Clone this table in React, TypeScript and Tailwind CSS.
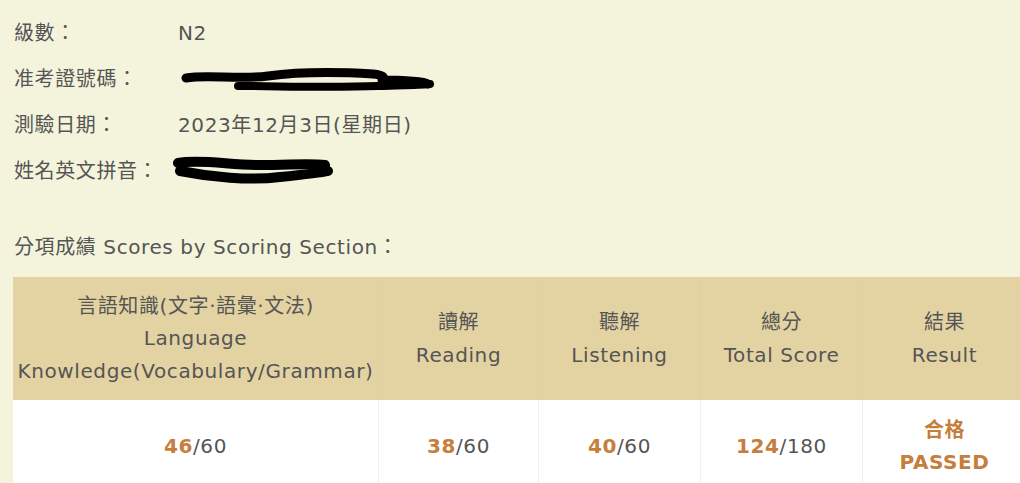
import React from "react";

const font = {
  fontFamily: '"DejaVu Sans", "Noto Sans CJK TC", sans-serif',
};

function Redact({ variant }: { variant: "id" | "name" }) {
  if (variant === "id") {
    return (
      <svg width="270" height="30" viewBox="0 0 270 30" className="block">
        <path
          d="M8 14 C30 10, 60 16, 90 12 C120 8, 160 8, 195 10 C205 11, 210 14, 200 16 C230 16, 245 17, 250 20"
          stroke="#000"
          strokeWidth="9"
          fill="none"
          strokeLinecap="round"
        />
        <path
          d="M60 22 C100 22, 150 24, 200 22 C225 21, 245 21, 252 20"
          stroke="#000"
          strokeWidth="8"
          fill="none"
          strokeLinecap="round"
        />
      </svg>
    );
  }
  return (
    <svg width="170" height="36" viewBox="0 0 170 36" className="block">
      <path
        d="M8 10 C30 6, 60 12, 90 12 C120 12, 140 10, 155 12"
        stroke="#000"
        strokeWidth="10"
        fill="none"
        strokeLinecap="round"
      />
      <path
        d="M10 18 C40 24, 80 28, 110 24 C130 22, 150 20, 158 18"
        stroke="#000"
        strokeWidth="10"
        fill="none"
        strokeLinecap="round"
      />
    </svg>
  );
}

const infoRows: { label: string; value: React.ReactNode }[] = [
  { label: "級數：", value: "N2" },
  { label: "准考證號碼：", value: <Redact variant="id" /> },
  { label: "測驗日期：", value: "2023年12月3日(星期日)" },
  { label: "姓名英文拼音：", value: <Redact variant="name" /> },
];

const columns = [
  { zh: "言語知識(文字\u00B7語彙\u00B7文法)", en: ["Language", "Knowledge(Vocabulary/Grammar)"], width: "w-[365px]" },
  { zh: "讀解", en: ["Reading"], width: "w-[160px]" },
  { zh: "聽解", en: ["Listening"], width: "w-[162px]" },
  { zh: "總分", en: ["Total Score"], width: "w-[162px]" },
  { zh: "結果", en: ["Result"], width: "w-[164px]" },
];

const scores = [
  { got: "46", max: "60" },
  { got: "38", max: "60" },
  { got: "40", max: "60" },
  { got: "124", max: "180" },
];

export default function App() {
  return (
    <div
      className="w-[1020px] h-[483px] overflow-hidden bg-[#f4f4dc] text-[#555] text-[20px] tracking-[0.03em]"
      style={font}
    >
      <div className="flex flex-col pt-[10px] pl-[14px]">
        {infoRows.map((row) => (
          <div key={row.label} className="flex h-[46px] items-center">
            <div className="w-[164px] shrink-0">{row.label}</div>
            <div className={row.label === "姓名英文拼音：" ? "-ml-[8px]" : ""}>
              {row.value}
            </div>
          </div>
        ))}
      </div>

      <div className="mt-[39px] pl-[14px] h-[28px] leading-[28px]">
        分項成績 Scores by Scoring Section：
      </div>

      <div className="mt-[16px] ml-[13px] w-[1013px]">
        <div className="flex h-[123px] bg-[#e3d3a2]">
          {columns.map((c, i) => (
            <div
              key={c.zh}
              className={`${c.width} shrink-0 flex flex-col items-center justify-center leading-[32.5px] ${
                i > 0 ? "border-l border-[#e0d09e]" : ""
              }`}
            >
              <div>{c.zh}</div>
              {c.en.map((line) => (
                <div key={line}>{line}</div>
              ))}
            </div>
          ))}
        </div>
        <div className="flex h-[92px] bg-white">
          {scores.map((s, i) => (
            <div
              key={i}
              className={`${columns[i].width} shrink-0 flex items-center justify-center ${
                i > 0 ? "border-l border-[#f3f1e8]" : ""
              }`}
            >
              <span className="text-[#c77d3b] font-bold">{s.got}</span>
              <span>/{s.max}</span>
            </div>
          ))}
          <div className="w-[164px] shrink-0 flex flex-col items-center justify-center border-l border-[#f3f1e8] text-[#c77d3b] font-bold leading-[32px]">
            <div>合格</div>
            <div>PASSED</div>
          </div>
        </div>
      </div>
    </div>
  );
}
